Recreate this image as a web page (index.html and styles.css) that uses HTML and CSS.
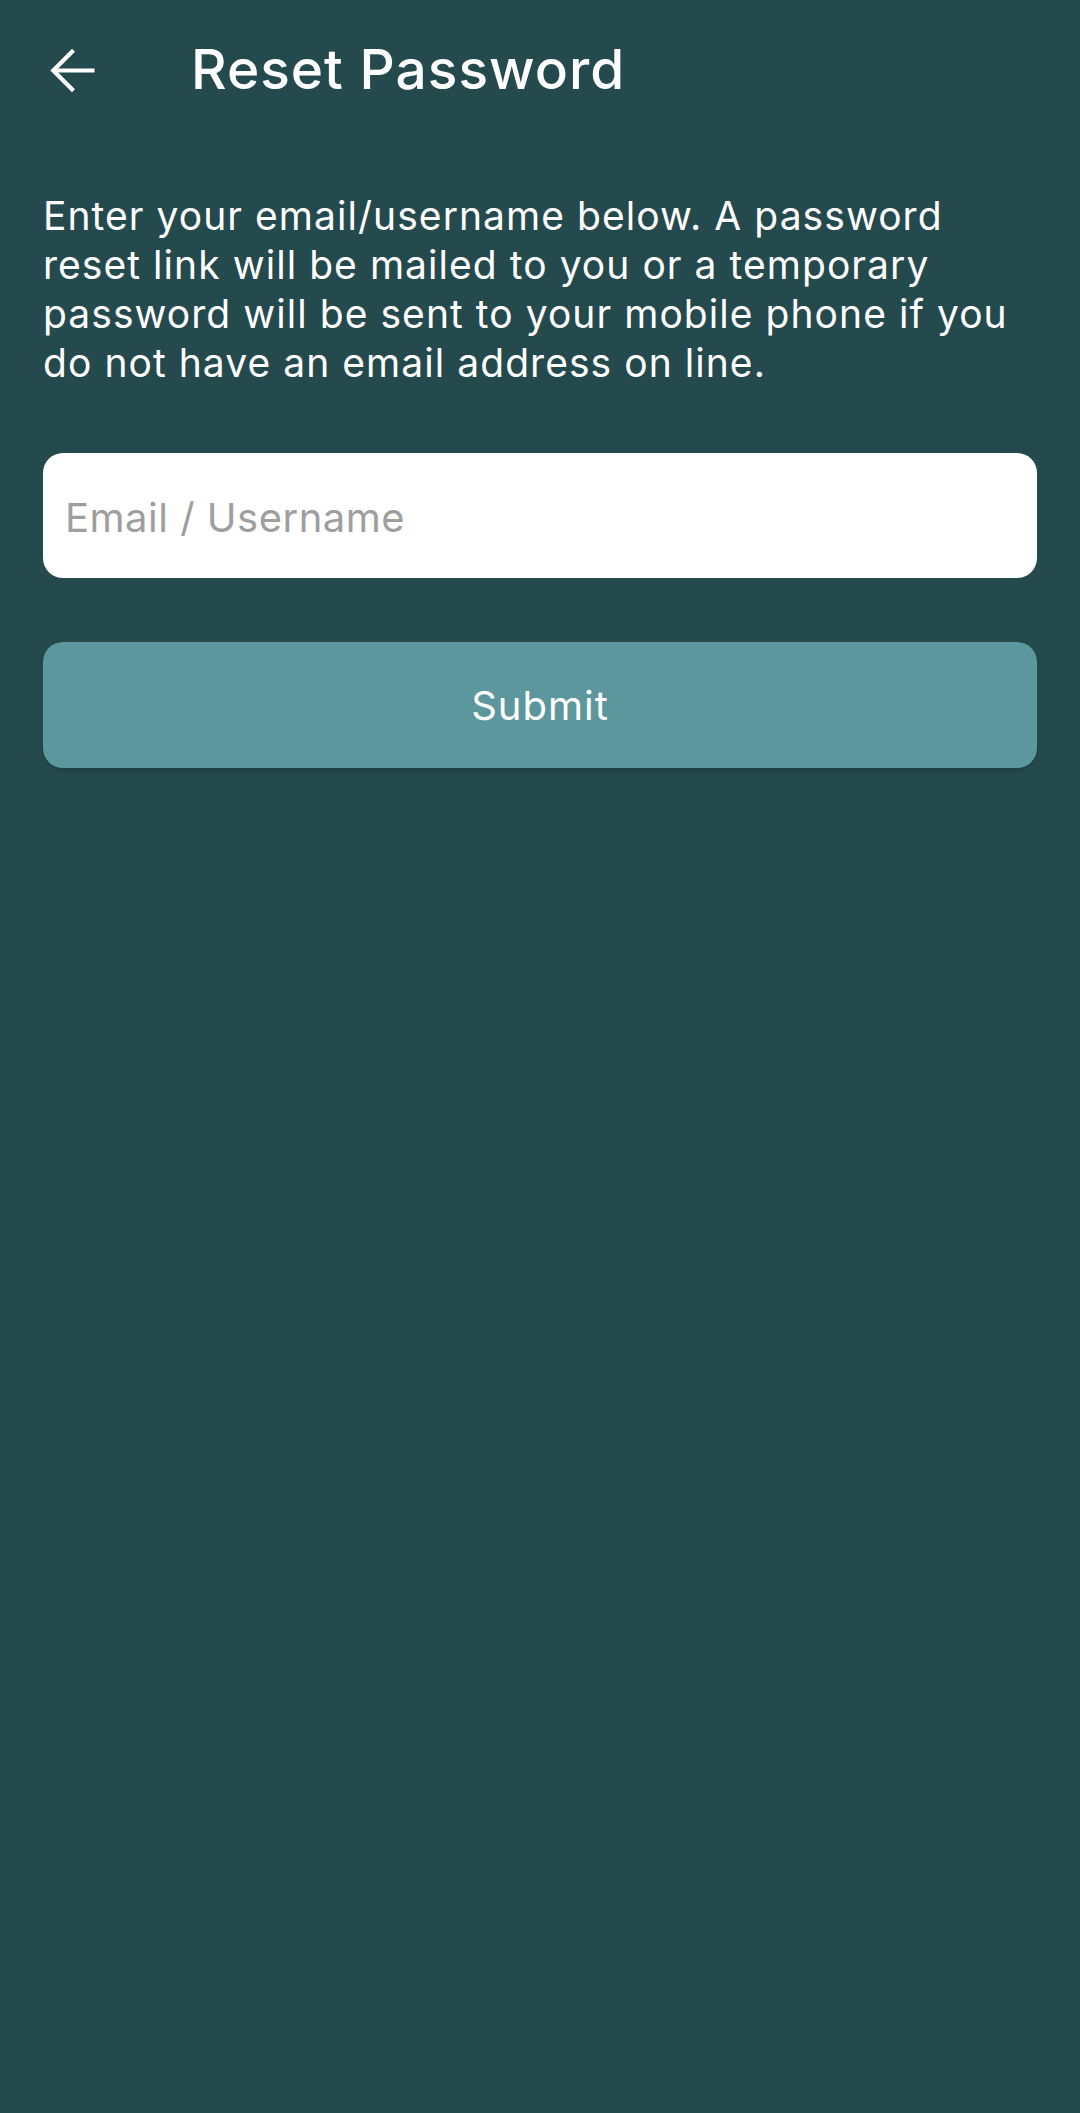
FILE: index.html
```html
<!DOCTYPE html>
<html lang="en">
<head>
<meta charset="utf-8">
<title>Reset Password</title>
<link rel="stylesheet" href="styles.css">
</head>
<body>
<div class="screen">
  <header class="appbar">
    <button class="back" aria-label="Back">
      <svg viewBox="0 0 24 24" width="63" height="63" fill="none" stroke="#ffffff" stroke-width="1.6" stroke-linecap="butt" stroke-linejoin="miter">
        <path d="M20 12H4.6"/>
        <path d="M12 4.3L4.3 12L12 19.7"/>
      </svg>
    </button>
    <h1 class="title">Reset Password</h1>
  </header>
  <main class="content">
    <p class="intro">Enter your email/username below. A password reset link will be mailed to you or a temporary password will be sent to your mobile phone if you do not have an email address on line.</p>
    <div class="field">
      <span class="placeholder">Email / Username</span>
    </div>
    <button class="submit">Submit</button>
  </main>
</div>
</body>
</html>
```

FILE: styles.css
```css
* { box-sizing: border-box; }
html, body {
  margin: 0;
  padding: 0;
  background: #244a4e;
}
body {
  font-family: Inter, "Noto Sans", sans-serif;
  color: #ffffff;
}
.screen {
  min-height: 2113px;
  background: #244a4e;
}
.appbar {
  height: 140px;
  display: flex;
  align-items: center;
  padding-left: 42px;
}
.back {
  width: 63px;
  height: 63px;
  padding: 0;
  border: 0;
  background: transparent;
  display: flex;
  align-items: center;
  justify-content: center;
}
.back svg { display: block; }
.title {
  margin: 0 0 0 86px;
  font-size: 55px;
  font-weight: 500;
  letter-spacing: 1px;
  line-height: 1;
  position: relative;
  top: -1px;
}
.content {
  padding: 51px 40px 0 43px;
  display: flex;
  flex-direction: column;
}
.intro {
  margin: 0 -12px 0 0;
  font-size: 39px;
  line-height: 49px;
  font-weight: 400;
  letter-spacing: 1.05px;
}
.field {
  margin-top: 66px;
  margin-right: 3px;
  height: 125px;
  background: #ffffff;
  border-radius: 20px;
  display: flex;
  align-items: center;
  padding-left: 22px;
}
.placeholder {
  font-size: 40px;
  letter-spacing: 0.5px;
  color: #9e9e9e;
  position: relative;
  top: 2px;
}
.submit {
  margin-top: 64px;
  margin-right: 3px;
  height: 126px;
  border: 0;
  border-radius: 20px;
  background: #5b979c;
  color: #ffffff;
  font-family: Inter, "Noto Sans", sans-serif;
  font-size: 40px;
  letter-spacing: 1px;
  font-weight: 400;
  box-shadow: 0 2px 4px rgba(0,0,0,0.15);
}
```
